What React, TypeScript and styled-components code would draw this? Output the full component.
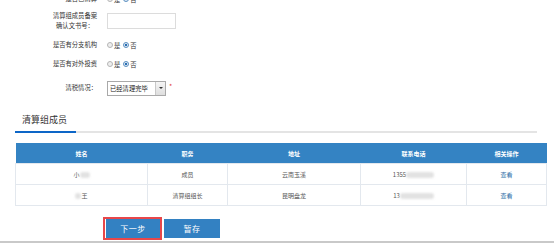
import styled, { createGlobalStyle } from 'styled-components';

const GlobalStyle = createGlobalStyle`
  html, body {
    margin: 0;
    padding: 0;
    background: #ffffff;
    overflow: hidden;
  }
  body {
    font-family: "Noto Sans CJK SC", "Noto Sans", "Liberation Sans", sans-serif;
    color: #333;
  }
`;

const Page = styled.div`
  width: 554px;
  height: 241px;
  overflow: hidden;
  border-bottom: 2px solid #c9c9c9;
`;

const Form = styled.div`
  display: flex;
  flex-direction: column;
  margin-top: -7px;
`;

const FormRow = styled.div<{ $h: number }>`
  display: grid;
  grid-template-columns: 99px auto;
  column-gap: 8px;
  align-items: center;
  height: ${(p) => p.$h}px;
`;

const Label = styled.div`
  text-align: right;
  padding-right: 2px;
  font-size: 6.3px;
  line-height: 10px;
  color: #333;
  white-space: nowrap;
`;

const TwoLine = styled.span`
  display: inline-block;
  text-align: center;
`;

const Field = styled.div`
  display: flex;
  align-items: center;
`;

const TextInput = styled.div`
  width: 67px;
  height: 14px;
  border: 1px solid #dcdcdc;
  background: #fff;
`;

const RadioGroup = styled.div`
  display: flex;
  align-items: center;
  font-size: 6.3px;
  color: #333;
`;

const Radio = styled.span<{ $checked?: boolean }>`
  width: 4px;
  height: 4px;
  border-radius: 50%;
  border: 0.5px solid ${(p) => (p.$checked ? '#5a8fc0' : '#b5b5b5')};
  background: ${(p) => (p.$checked ? 'radial-gradient(circle, #2a6fb4 40%, #dfe9f3 55%)' : '#eeeeee')};
  margin-right: 1px;
`;

const RadioText = styled.span`
  margin-right: 3px;
`;

const Select = styled.div`
  display: flex;
  width: 57px;
  height: 13px;
  border: 1px solid #a9a9a9;
  background: #fff;
`;

const SelectValue = styled.div`
  flex: 1;
  font-size: 6.3px;
  line-height: 13px;
  padding-left: 2px;
  color: #222;
`;

const SelectButton = styled.div`
  width: 9px;
  border-left: 1px solid #c8c8c8;
  background: linear-gradient(#f5f5f5, #dedede);
  display: flex;
  align-items: center;
  justify-content: center;
  &::after {
    content: '';
    border-left: 2px solid transparent;
    border-right: 2px solid transparent;
    border-top: 2.5px solid #333;
  }
`;

const Required = styled.span`
  color: #e23b3b;
  font-size: 7px;
  margin-left: 3px;
  margin-top: -5px;
`;

const Section = styled.div`
  margin: 12px 17px 0 15px;
`;

const SectionTitle = styled.div`
  font-size: 9px;
  line-height: 12px;
  color: #333;
  padding-left: 7px;
`;

const TitleBar = styled.div`
  margin-top: 5px;
  height: 2px;
  background: #e4e4e4;
  &::before {
    content: '';
    display: block;
    width: 61px;
    height: 2px;
    background: #0d66c7;
  }
`;

const Table = styled.table`
  margin: 10px 0 0 15px;
  width: 531px;
  border-collapse: collapse;
  table-layout: fixed;
  font-size: 6px;
`;

const Th = styled.th<{ $w: number }>`
  width: ${(p) => p.$w}px;
  height: 20px;
  padding: 0;
  background: #3483c3;
  color: #fff;
  font-weight: bold;
  text-align: center;
`;

const Td = styled.td`
  height: 20px;
  padding: 0;
  border: 1px solid #e3e8ee;
  text-align: center;
  color: #555;
`;

const LinkText = styled.span`
  color: #2d6da6;
`;

const Blur = styled.span<{ $w: number }>`
  display: inline-block;
  width: ${(p) => p.$w}px;
  height: 6px;
  vertical-align: middle;
  background: #e2e2e2;
  border-radius: 3px;
  filter: blur(1.2px);
`;

const Buttons = styled.div`
  display: flex;
  align-items: center;
  margin: 11px 0 0 103px;
`;

const Highlight = styled.div`
  display: flex;
  border: 2px solid #e8474a;
  padding: 0 0 0 1px;
`;

const Button = styled.button`
  height: 19px;
  border: none;
  padding: 0;
  background: #3381c2;
  color: #fff;
  font-family: inherit;
  font-size: 8px;
  letter-spacing: 0.5px;
`;

const NextButton = styled(Button)`
  width: 54px;
`;

const SaveButton = styled(Button)`
  width: 56px;
  margin-left: 2px;
`;

interface Member {
  name: React.ReactNode;
  role: string;
  address: string;
  phone: React.ReactNode;
}

const members: Member[] = [
  { name: <>小<Blur $w={10} /></>, role: '成员', address: '云南玉溪', phone: <>1355<Blur $w={28} /></> },
  { name: <><Blur $w={6} />王</>, role: '清算组组长', address: '昆明盘龙', phone: <>13<Blur $w={34} /></> },
];

const columns = [
  { title: '姓名', w: 132 },
  { title: '职务', w: 80 },
  { title: '地址', w: 133 },
  { title: '联系电话', w: 106 },
  { title: '相关操作', w: 80 },
];

function YesNo() {
  return (
    <RadioGroup>
      <Radio />
      <RadioText>是</RadioText>
      <Radio $checked />
      <span>否</span>
    </RadioGroup>
  );
}

export default function App() {
  return (
    <Page>
      <GlobalStyle />
      <Form>
        <FormRow $h={12}>
          <Label>是否已清算</Label>
          <YesNo />
        </FormRow>
        <FormRow $h={31}>
          <Label>
            <TwoLine>
              清算组成员备案
              <br />
              确认文书号：
            </TwoLine>
          </Label>
          <Field>
            <TextInput />
          </Field>
        </FormRow>
        <FormRow $h={18}>
          <Label>是否有分支机构</Label>
          <YesNo />
        </FormRow>
        <FormRow $h={20}>
          <Label>是否有对外投资</Label>
          <YesNo />
        </FormRow>
        <FormRow $h={28}>
          <Label>清税情况：</Label>
          <Field>
            <Select>
              <SelectValue>已经清理完毕</SelectValue>
              <SelectButton />
            </Select>
            <Required>*</Required>
          </Field>
        </FormRow>
      </Form>

      <Section>
        <SectionTitle>清算组成员</SectionTitle>
        <TitleBar />
      </Section>

      <Table>
        <thead>
          <tr>
            {columns.map((c) => (
              <Th key={c.title} $w={c.w}>
                {c.title}
              </Th>
            ))}
          </tr>
        </thead>
        <tbody>
          {members.map((m, i) => (
            <tr key={i}>
              <Td>{m.name}</Td>
              <Td>{m.role}</Td>
              <Td>{m.address}</Td>
              <Td>{m.phone}</Td>
              <Td>
                <LinkText>查看</LinkText>
              </Td>
            </tr>
          ))}
        </tbody>
      </Table>

      <Buttons>
        <Highlight>
          <NextButton>下一步</NextButton>
        </Highlight>
        <SaveButton>暂存</SaveButton>
      </Buttons>
    </Page>
  );
}
